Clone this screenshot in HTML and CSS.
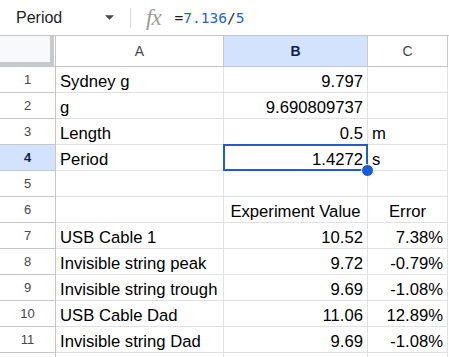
FILE: index.html
```html
<!DOCTYPE html>
<html>
<head>
<meta charset="utf-8">
<link rel="stylesheet" href="styles.css">
</head>
<body>
<div class="app">
  <div class="fbar">
    <div class="namebox">
      <span class="name">Period</span>
      <svg class="caret" width="10" height="5" viewBox="0 0 10 5"><path d="M0 0h10L5 5z" fill="#444746"/></svg>
    </div>
    <div class="sep"></div>
    <span class="fx">fx</span>
    <div class="formula"><span class="op">=</span><span class="num">7.136</span><span class="op">/</span><span class="num">5</span></div>
  </div>
  <div class="grid">
    <div class="corner"><div class="corner-in"></div></div>
    <div class="ch">A</div><div class="ch ch-sel">B</div><div class="ch">C</div>

    <div class="rh">1</div><div class="c">Sydney g</div><div class="c r">9.797</div><div class="c"></div>
    <div class="rh">2</div><div class="c">g</div><div class="c r">9.690809737</div><div class="c"></div>
    <div class="rh">3</div><div class="c">Length</div><div class="c r">0.5</div><div class="c">m</div>
    <div class="rh rh-sel">4</div><div class="c">Period</div><div class="c r active">1.4272<span class="selbox"></span><span class="handle"></span></div><div class="c">s</div>
    <div class="rh">5</div><div class="c"></div><div class="c"></div><div class="c"></div>
    <div class="rh">6</div><div class="c"></div><div class="c ctr">Experiment Value</div><div class="c ctr">Error</div>
    <div class="rh">7</div><div class="c">USB Cable 1</div><div class="c r">10.52</div><div class="c r">7.38%</div>
    <div class="rh">8</div><div class="c">Invisible string peak</div><div class="c r">9.72</div><div class="c r">-0.79%</div>
    <div class="rh">9</div><div class="c">Invisible string trough</div><div class="c r">9.69</div><div class="c r">-1.08%</div>
    <div class="rh">10</div><div class="c">USB Cable Dad</div><div class="c r">11.06</div><div class="c r">12.89%</div>
    <div class="rh">11</div><div class="c">Invisible string Dad</div><div class="c r">9.69</div><div class="c r">-1.08%</div>
    <div class="rh"></div><div class="c"></div><div class="c"></div><div class="c"></div>
  </div>
</div>
</body>
</html>
```

FILE: styles.css
```css
html, body {
  margin: 0;
  padding: 0;
  background: #fff;
}
body {
  width: 449px;
  height: 357px;
  overflow: hidden;
}
.app {
  width: 449px;
}
.fbar {
  height: 35px;
  border-bottom: 1px solid #c4c7c5;
  display: flex;
  align-items: center;
  box-sizing: content-box;
}
.namebox {
  display: flex;
  align-items: center;
  width: 114px;
  padding-left: 16px;
  box-sizing: border-box;
}
.name {
  font-family: "Liberation Sans", Arial, sans-serif;
  font-size: 16px;
  color: #1f1f1f;
  flex: 1;
}
.caret {
  display: block;
  width: 9px;
  height: 5px;
}
.sep {
  width: 1px;
  height: 20px;
  background: #dadce0;
  margin-left: 16px;
}
.fx {
  font-family: "Liberation Serif", serif;
  font-style: italic;
  font-size: 23px;
  color: #9a9a9a;
  margin-left: 15px;
  line-height: 1;
  letter-spacing: -1px;
}
.formula {
  font-family: "DejaVu Sans Mono", monospace;
  font-size: 14.5px;
  margin-left: 14px;
  color: #1f1f1f;
}
.formula .num {
  color: #2a63cf;
}
.grid {
  display: grid;
  grid-template-columns: 56px 168px 144px 80px;
  grid-template-rows: 31px repeat(12, 26px);
}
.corner {
  border-right: 1px solid #c4c7c5;
  border-bottom: 1px solid #c4c7c5;
  background: #fff;
}
.corner-in {
  width: 50px;
  height: 26px;
  background: #f8f9fa;
  border-right: 4px solid #c7c9cc;
  border-bottom: 4px solid #c7c9cc;
}
.ch {
  border-right: 1px solid #c4c7c5;
  border-bottom: 1px solid #c4c7c5;
  display: flex;
  align-items: center;
  justify-content: center;
  font-family: "Liberation Sans", Arial, sans-serif;
  font-size: 14px;
  color: #444746;
}
.ch-sel {
  background: #d3e3fd;
  color: #0b1f49;
  font-weight: bold;
}
.rh {
  border-right: 1px solid #c4c7c5;
  border-bottom: 1px solid #c4c7c5;
  display: flex;
  align-items: center;
  justify-content: center;
  font-family: "Liberation Sans", Arial, sans-serif;
  font-size: 13px;
  color: #444746;
}
.rh-sel {
  background: #d3e3fd;
  color: #0b1f49;
  font-weight: bold;
}
.c {
  position: relative;
  border-right: 1px solid #e1e1e1;
  border-bottom: 1px solid #e1e1e1;
  display: flex;
  align-items: flex-end;
  padding: 0 4px 1px 4px;
  font-family: "Liberation Sans", Arial, sans-serif;
  font-size: 16.67px;
  line-height: 19px;
  color: #000;
  white-space: nowrap;
  min-width: 0;
}
.c.r {
  justify-content: flex-end;
}
.c.ctr {
  justify-content: center;
}
.selbox {
  position: absolute;
  left: -1px;
  top: -1px;
  right: -1px;
  bottom: -1px;
  border: 2px solid #1a5fd0;
  pointer-events: none;
}
.handle {
  position: absolute;
  right: -7px;
  bottom: -7px;
  width: 11px;
  height: 11px;
  border-radius: 50%;
  background: #1a5fd0;
  border: 1px solid #fff;
  z-index: 2;
}
```
